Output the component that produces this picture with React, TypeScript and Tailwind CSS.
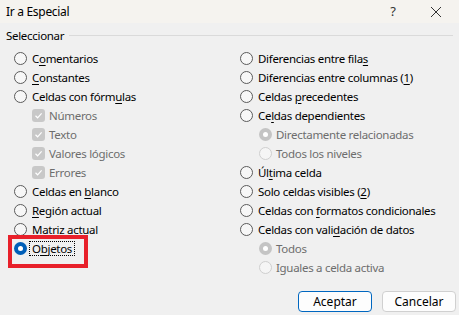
import React from 'react';

type Opt = {
    pre: string;
    key: string;
    post: string;
    kind?: 'radio' | 'check' | 'subradio';
    checked?: boolean;
};

const U = ({ pre, k, post }: { pre: string; k: string; post: string }) => (
    <span className="whitespace-nowrap">
        {pre}
        {k && <span className="underline underline-offset-2">{k}</span>}
        {post}
    </span>
);

const Radio = ({ checked, disabled }: { checked?: boolean; disabled?: boolean }) => {
    if (checked && !disabled) {
        return (
            <span className="flex h-[13px] w-[13px] shrink-0 items-center justify-center rounded-full bg-[#005fb8]">
                <span className="h-[5px] w-[5px] rounded-full bg-white" />
            </span>
        );
    }
    if (checked && disabled) {
        return (
            <span className="flex h-[13px] w-[13px] shrink-0 items-center justify-center rounded-full bg-[#c4c4c4]">
                <span className="h-[5px] w-[5px] rounded-full bg-white" />
            </span>
        );
    }
    return (
        <span
            className={
                disabled
                    ? 'h-[13px] w-[13px] shrink-0 rounded-full border border-[#cfcfcf] bg-[#f5f5f5]'
                    : 'h-[13px] w-[13px] shrink-0 rounded-full border border-[#5b5b5b] bg-[#f7f7f7]'
            }
        />
    );
};

const Check = () => (
    <span className="flex h-[13px] w-[13px] shrink-0 items-center justify-center rounded-[3px] bg-[#c8c8c8]">
        <svg width="9" height="9" viewBox="0 0 9 9">
            <path d="M1.5 4.8 L3.6 6.8 L7.6 2.4" fill="none" stroke="#fff" strokeWidth="1.2" />
        </svg>
    </span>
);

const Row = ({ o }: { o: Opt }) => {
    const kind = o.kind ?? 'radio';
    if (kind === 'check') {
        return (
            <div className="flex h-[19px] items-center pl-[18px]">
                <Check />
                <span className="ml-[4px] text-[#6d6d6d]">
                    <U pre={o.pre} k={o.key} post={o.post} />
                </span>
            </div>
        );
    }
    if (kind === 'subradio') {
        return (
            <div className="flex h-[19px] items-center pl-[19px]">
                <Radio checked={o.checked} disabled />
                <span className="ml-[4px] text-[#6d6d6d]">
                    <U pre={o.pre} k={o.key} post={o.post} />
                </span>
            </div>
        );
    }
    return (
        <div className="flex h-[19px] items-center">
            <Radio checked={o.checked} />
            <span className="ml-[5px] text-black">
                <U pre={o.pre} k={o.key} post={o.post} />
            </span>
        </div>
    );
};

const left: Opt[] = [
    { pre: 'C', key: 'o', post: 'mentarios' },
    { pre: '', key: 'C', post: 'onstantes' },
    { pre: 'Celdas con fórm', key: 'u', post: 'las' },
    { pre: 'Números', key: '', post: '', kind: 'check' },
    { pre: 'Texto', key: '', post: '', kind: 'check' },
    { pre: 'Valores lógicos', key: '', post: '', kind: 'check' },
    { pre: 'Errores', key: '', post: '', kind: 'check' },
    { pre: 'Celdas en ', key: 'b', post: 'lanco' },
    { pre: '', key: 'R', post: 'egión actual' },
    { pre: 'Matri', key: 'z', post: ' actual' },
];

const right: Opt[] = [
    { pre: 'Diferencias entre fila', key: 's', post: '' },
    { pre: 'Diferencias entre columnas (', key: '1', post: ')' },
    { pre: 'Celdas ', key: 'p', post: 'recedentes' },
    { pre: 'Ce', key: 'l', post: 'das dependientes' },
    { pre: 'Directamente relacionadas', key: '', post: '', kind: 'subradio', checked: true },
    { pre: 'Todos los niveles', key: '', post: '', kind: 'subradio' },
    { pre: 'Úl', key: 't', post: 'ima celda' },
    { pre: 'Solo celdas visibles (', key: '2', post: ')' },
    { pre: 'Celdas con ', key: 'f', post: 'ormatos condicionales' },
    { pre: 'Celdas con vali', key: 'd', post: 'ación de datos' },
    { pre: 'Todos', key: '', post: '', kind: 'subradio', checked: true },
    { pre: 'Iguales a celda activa', key: '', post: '', kind: 'subradio' },
];

const App = () => {
    return (
        <div
            className="relative flex h-[315px] w-[459px] flex-col overflow-hidden bg-[#f0f0f0] text-[11.5px] leading-none tracking-[-0.3px] text-black"
            style={{ fontFamily: '"Noto Sans", "Open Sans", sans-serif' }}
        >
            <div className="flex h-[23px] items-center justify-between bg-[#f5f3ef] pl-[6px]">
                <span className="text-[12px]">Ir a Especial</span>
                <div className="flex items-center">
                    <span className="w-[40px] text-center text-[13px] text-[#333]">?</span>
                    <svg width="46" height="12" viewBox="0 0 46 12">
                        <path d="M18 1 L28 11 M28 1 L18 11" stroke="#333" strokeWidth="1" />
                    </svg>
                </div>
            </div>

            <div className="flex h-[22px] items-center gap-[5px] px-[6px] pt-[3px]">
                <span>Seleccionar</span>
                <div className="h-px flex-1 bg-[#dadada]" />
            </div>

            <div className="grid grid-cols-[226px_1fr] pl-[14px] pt-[4px]">
                <div className="flex flex-col">
                    {left.map((o, i) => (
                        <Row key={i} o={o} />
                    ))}
                    <div className="flex h-[19px] items-center">
                        <Radio checked />
                        <span className="ml-[2px] border border-dotted border-black px-[2px] py-[1px]">
                            O<span className="underline underline-offset-2">b</span>jetos
                        </span>
                    </div>
                </div>
                <div className="flex flex-col">
                    {right.map((o, i) => (
                        <Row key={i} o={o} />
                    ))}
                </div>
            </div>

            <div className="mt-auto mb-[3px] flex justify-end gap-[10px] pr-[3px]">
                <button className="h-[21px] w-[74px] rounded-[4px] border border-[#0067c0] bg-[#fdfdfd] text-[12px] tracking-normal">
                    Aceptar
                </button>
                <button className="h-[21px] w-[74px] rounded-[4px] border border-[#d0d0d0] bg-[#fdfdfd] text-[12px] tracking-normal">
                    Cancelar
                </button>
            </div>

            <div className="absolute left-[8px] top-[235px] h-[33px] w-[80px] border-4 border-[#e8202a]" />
        </div>
    );
};

export default App;
